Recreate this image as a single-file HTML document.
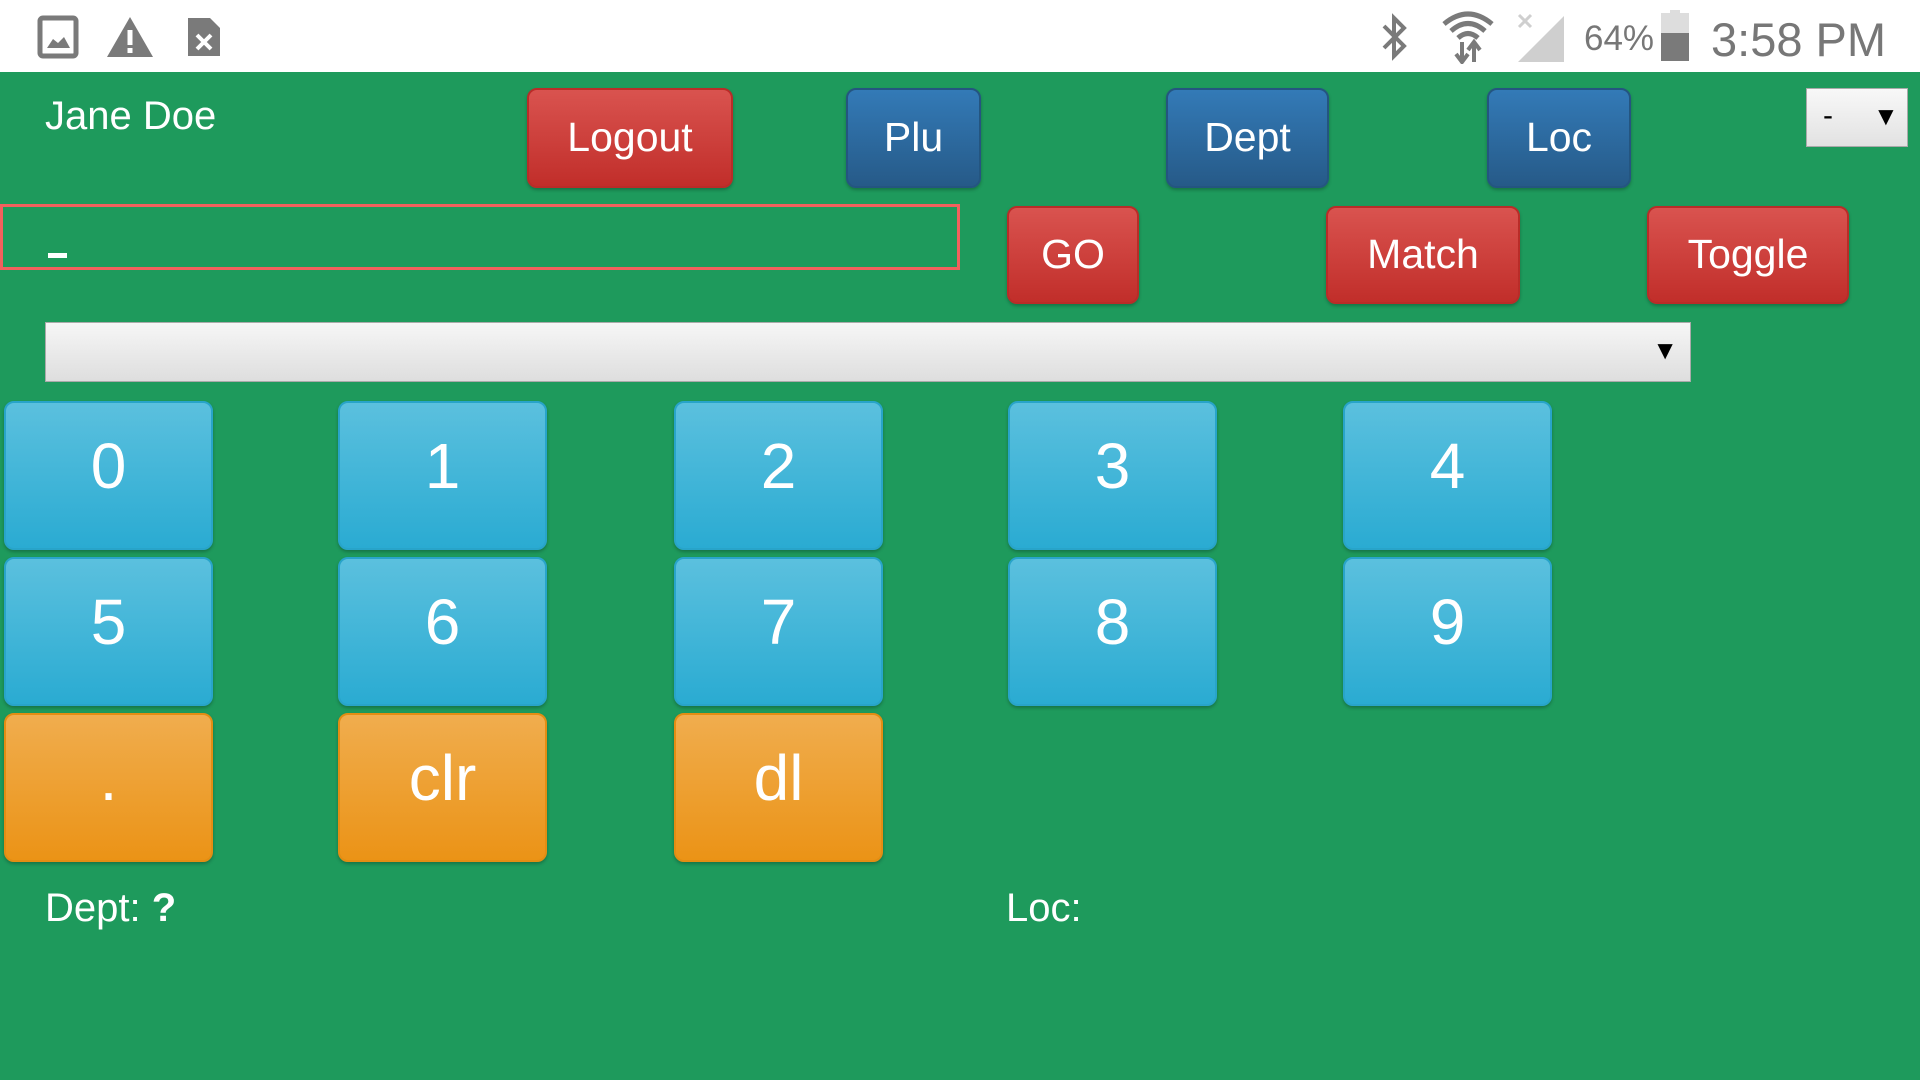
<!DOCTYPE html>
<html><head><meta charset="utf-8"><style>
*{margin:0;padding:0;box-sizing:border-box}
body{width:1920px;height:1080px;background:#1e9a5c;font-family:"Liberation Sans",sans-serif;position:relative;overflow:hidden}
.sb{position:absolute;left:0;top:0;width:1920px;height:72px;background:#fff}
.a{position:absolute}
.btn{position:absolute;border-radius:10px;color:#fff;font-size:41px;display:flex;align-items:center;justify-content:center;box-shadow:0 2px 3px rgba(0,0,0,.25)}
.r{background:linear-gradient(#d9534f,#c12e2a);border:2px solid #b92c28;padding-bottom:2px}
.b{background:linear-gradient(#337ab7,#265a88);border:2px solid #245580;padding-bottom:2px}
.k{background:linear-gradient(#5bc0de,#2aabd2);border:2px solid #28a4c9;font-size:64px;width:209px;height:149px;padding-bottom:20px}
.o{background:linear-gradient(#f0ad4e,#eb9316);border:2px solid #e38d13;font-size:64px;width:209px;height:149px;padding-bottom:20px}
.t{position:absolute;color:#fff;font-size:40px}
</style></head><body>
<div class="sb">
<svg class="a" style="left:37px;top:15px" width="42" height="44" viewBox="0 0 42 44"><rect x="3" y="3" width="36" height="38" rx="3" fill="none" stroke="#7a7a7a" stroke-width="5"/><path d="M10 33 L16 24 L21 28 L27 22 L33 33Z" fill="#7a7a7a"/></svg>
<svg class="a" style="left:106px;top:15px" width="48" height="44" viewBox="0 0 48 44"><path d="M24 2 L47 42 L1 42Z" fill="#7a7a7a"/><rect x="21.5" y="15" width="5" height="15" fill="#fff"/><rect x="21.5" y="33" width="5" height="5" fill="#fff"/></svg>
<svg class="a" style="left:185px;top:15px" width="36" height="44" viewBox="0 0 36 44"><path d="M3 3 H25 L35 13 V41 H3Z" fill="#7a7a7a"/><path d="M12 20 L26 34 M26 20 L12 34" stroke="#fff" stroke-width="4"/></svg>
<svg class="a" style="left:1376px;top:12px" width="36" height="50" viewBox="0 0 36 50"><path d="M8 14 L28 34 L18 44 V6 L28 16 L8 36" fill="none" stroke="#7a7a7a" stroke-width="4"/></svg>
<svg class="a" style="left:1438px;top:10px" width="60" height="54" viewBox="0 0 60 54"><path d="M6 14 Q30 -6 54 14 M13 21 Q30 6 47 21 M20 28 Q30 19 40 28" fill="none" stroke="#7a7a7a" stroke-width="5"/><path d="M24 32 V50 M18 44 L24 52 L30 44 M36 52 V34 M30 40 L36 32 L42 40" fill="none" stroke="#7a7a7a" stroke-width="4"/></svg>
<svg class="a" style="left:1516px;top:12px" width="50" height="52" viewBox="0 0 50 52"><path d="M2 50 L48 4 V50Z" fill="#cfcfcf"/><path d="M3 3 L15 15 M15 3 L3 15" stroke="#cfcfcf" stroke-width="3"/></svg>
<div class="a" style="left:1584px;top:19px;font-size:35px;color:#777">64%</div>
<div class="a" style="left:1661px;top:13px;width:28px;height:48px;background:#ddd"></div>
<div class="a" style="left:1670px;top:10px;width:10px;height:4px;background:#ddd"></div>
<div class="a" style="left:1661px;top:33px;width:28px;height:28px;background:#7a7a7a"></div>
<div class="a" style="left:1711px;top:12px;font-size:47px;color:#777">3:58 PM</div>
</div>
<div class="t" style="left:45px;top:94px">Jane Doe</div>
<div class="btn r" style="left:527px;top:88px;width:206px;height:100px">Logout</div>
<div class="btn b" style="left:846px;top:88px;width:135px;height:100px">Plu</div>
<div class="btn b" style="left:1166px;top:88px;width:163px;height:100px">Dept</div>
<div class="btn b" style="left:1487px;top:88px;width:144px;height:100px">Loc</div>
<div class="a" style="left:1806px;top:88px;width:102px;height:59px;background:linear-gradient(#f8f8f8,#e2e2e2);border:1px solid #aaa;font-size:30px"><span class="a" style="left:16px;top:10px">-</span><span class="a" style="left:66px;top:12px;font-size:26px">▼</span></div>
<div class="a" style="left:0;top:204px;width:960px;height:66px;border:3px solid #f2605d"></div>
<div class="a" style="left:48px;top:253px;width:19px;height:5px;background:#fff"></div>
<div class="btn r" style="left:1007px;top:206px;width:132px;height:98px">GO</div>
<div class="btn r" style="left:1326px;top:206px;width:194px;height:98px">Match</div>
<div class="btn r" style="left:1647px;top:206px;width:202px;height:98px">Toggle</div>
<div class="a" style="left:45px;top:322px;width:1646px;height:60px;background:linear-gradient(#f6f6f6,#dedede);border:1px solid #aaa"><span class="a" style="right:12px;top:12px;font-size:26px">▼</span></div>
<div class="btn k" style="left:4px;top:401px">0</div>
<div class="btn k" style="left:338px;top:401px">1</div>
<div class="btn k" style="left:674px;top:401px">2</div>
<div class="btn k" style="left:1008px;top:401px">3</div>
<div class="btn k" style="left:1343px;top:401px">4</div>
<div class="btn k" style="left:4px;top:557px">5</div>
<div class="btn k" style="left:338px;top:557px">6</div>
<div class="btn k" style="left:674px;top:557px">7</div>
<div class="btn k" style="left:1008px;top:557px">8</div>
<div class="btn k" style="left:1343px;top:557px">9</div>
<div class="btn o" style="left:4px;top:713px">.</div>
<div class="btn o" style="left:338px;top:713px">clr</div>
<div class="btn o" style="left:674px;top:713px">dl</div>
<div class="t" style="left:45px;top:886px">Dept: <b>?</b></div>
<div class="t" style="left:1006px;top:886px">Loc:</div>
</body></html>
